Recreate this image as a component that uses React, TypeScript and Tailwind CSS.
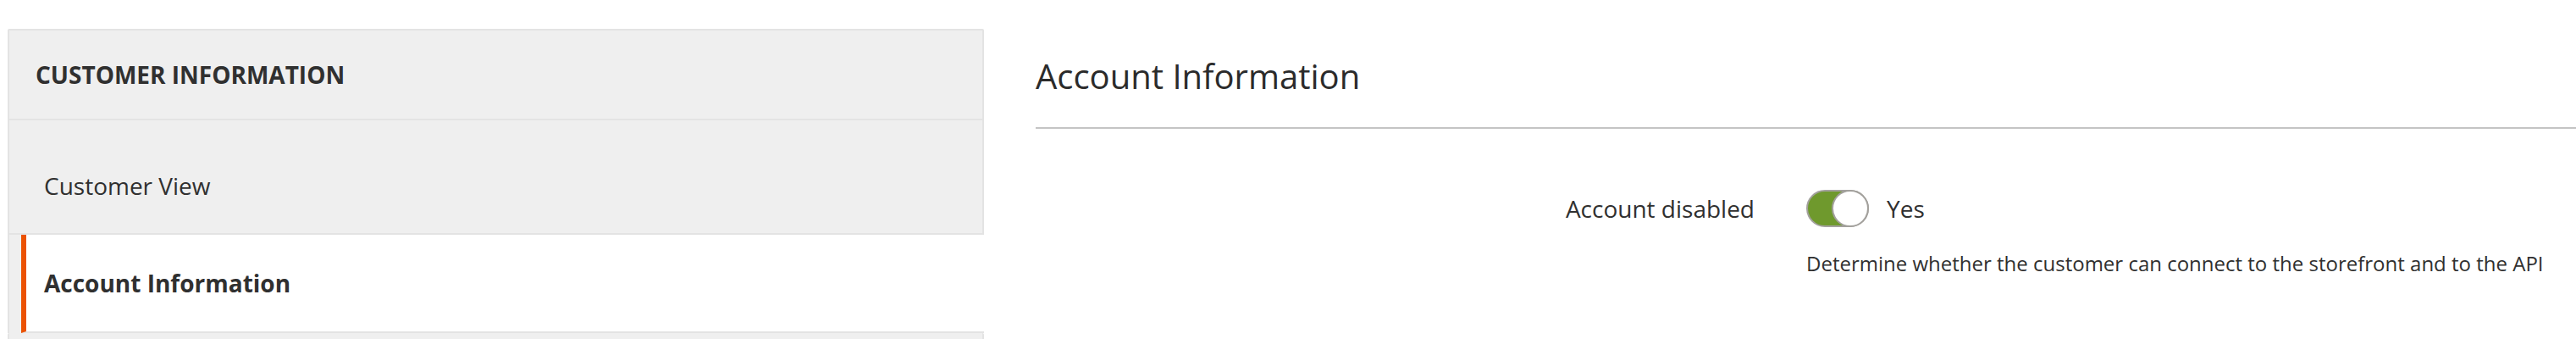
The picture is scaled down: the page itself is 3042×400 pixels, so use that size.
const SideItem = ({ label }: { label: string }) => (
  <div className="border-x-2 border-b-2 border-[#e3e3e3] bg-[#efefef] pl-[41px] pt-[63px] pb-[42px] text-[28px] leading-[28px]">
    {label}
  </div>
);

const Toggle = () => (
  <div className="flex h-[44px] w-[74px] items-center justify-end rounded-full border-2 border-[#a3a19d] bg-[#6f992d]">
    <span className="-m-[2px] h-[44px] w-[44px] rounded-full border-2 border-[#a3a19d] bg-white" />
  </div>
);

const App = () => {
  return (
    <div className="flex h-[400px] w-[3042px] overflow-hidden bg-white font-['Open_Sans',sans-serif] text-[#303030]">
      {/* left nav */}
      <div className="ml-[9px] mt-[34px] flex w-[1153px] shrink-0 flex-col">
        <div className="rounded-t-[2px] border-2 border-[#e3e3e3] bg-[#efefef] pl-[31px] py-[38px] text-[28px] font-bold uppercase leading-[28px]">
          Customer Information
        </div>
        <SideItem label="Customer View" />
        <div className="flex border-l-2 border-[#e3e3e3]">
          <div className="w-[14px] shrink-0 bg-[#efefef]" />
          <div className="flex-1 border-b-2 border-l-[6px] border-b-[#e3e3e3] border-l-[#eb5202] bg-white pl-[21px] pt-[43px] pb-[43px] text-[28px] font-bold leading-[28px]">
            Account Information
          </div>
        </div>
        <div className="h-[60px] rounded-t-[2px] border-x-2 border-[#e3e3e3] bg-[#efefef]" />
      </div>

      {/* main */}
      <div className="ml-[61px] flex flex-1 flex-col">
        <h2 className="mt-[70px] text-[40px] font-normal leading-[40px] text-[#2b2b2b]">Account Information</h2>
        <div className="mt-[40px] border-b-2 border-[#c4c4c4]" />
        <div className="mt-[72px] grid grid-cols-[849px_1fr] items-center gap-x-[61px]">
          <div className="text-right text-[28px] leading-[28px]">Account disabled</div>
          <div className="flex items-center gap-[21px]">
            <Toggle />
            <span className="text-[28px] leading-[28px]">Yes</span>
          </div>
        </div>
        <div className="mt-[31px] pl-[910px] text-[24px] leading-[24px]">
          Determine whether the customer can connect to the storefront and to the API
        </div>
      </div>
    </div>
  );
};

export default App;
